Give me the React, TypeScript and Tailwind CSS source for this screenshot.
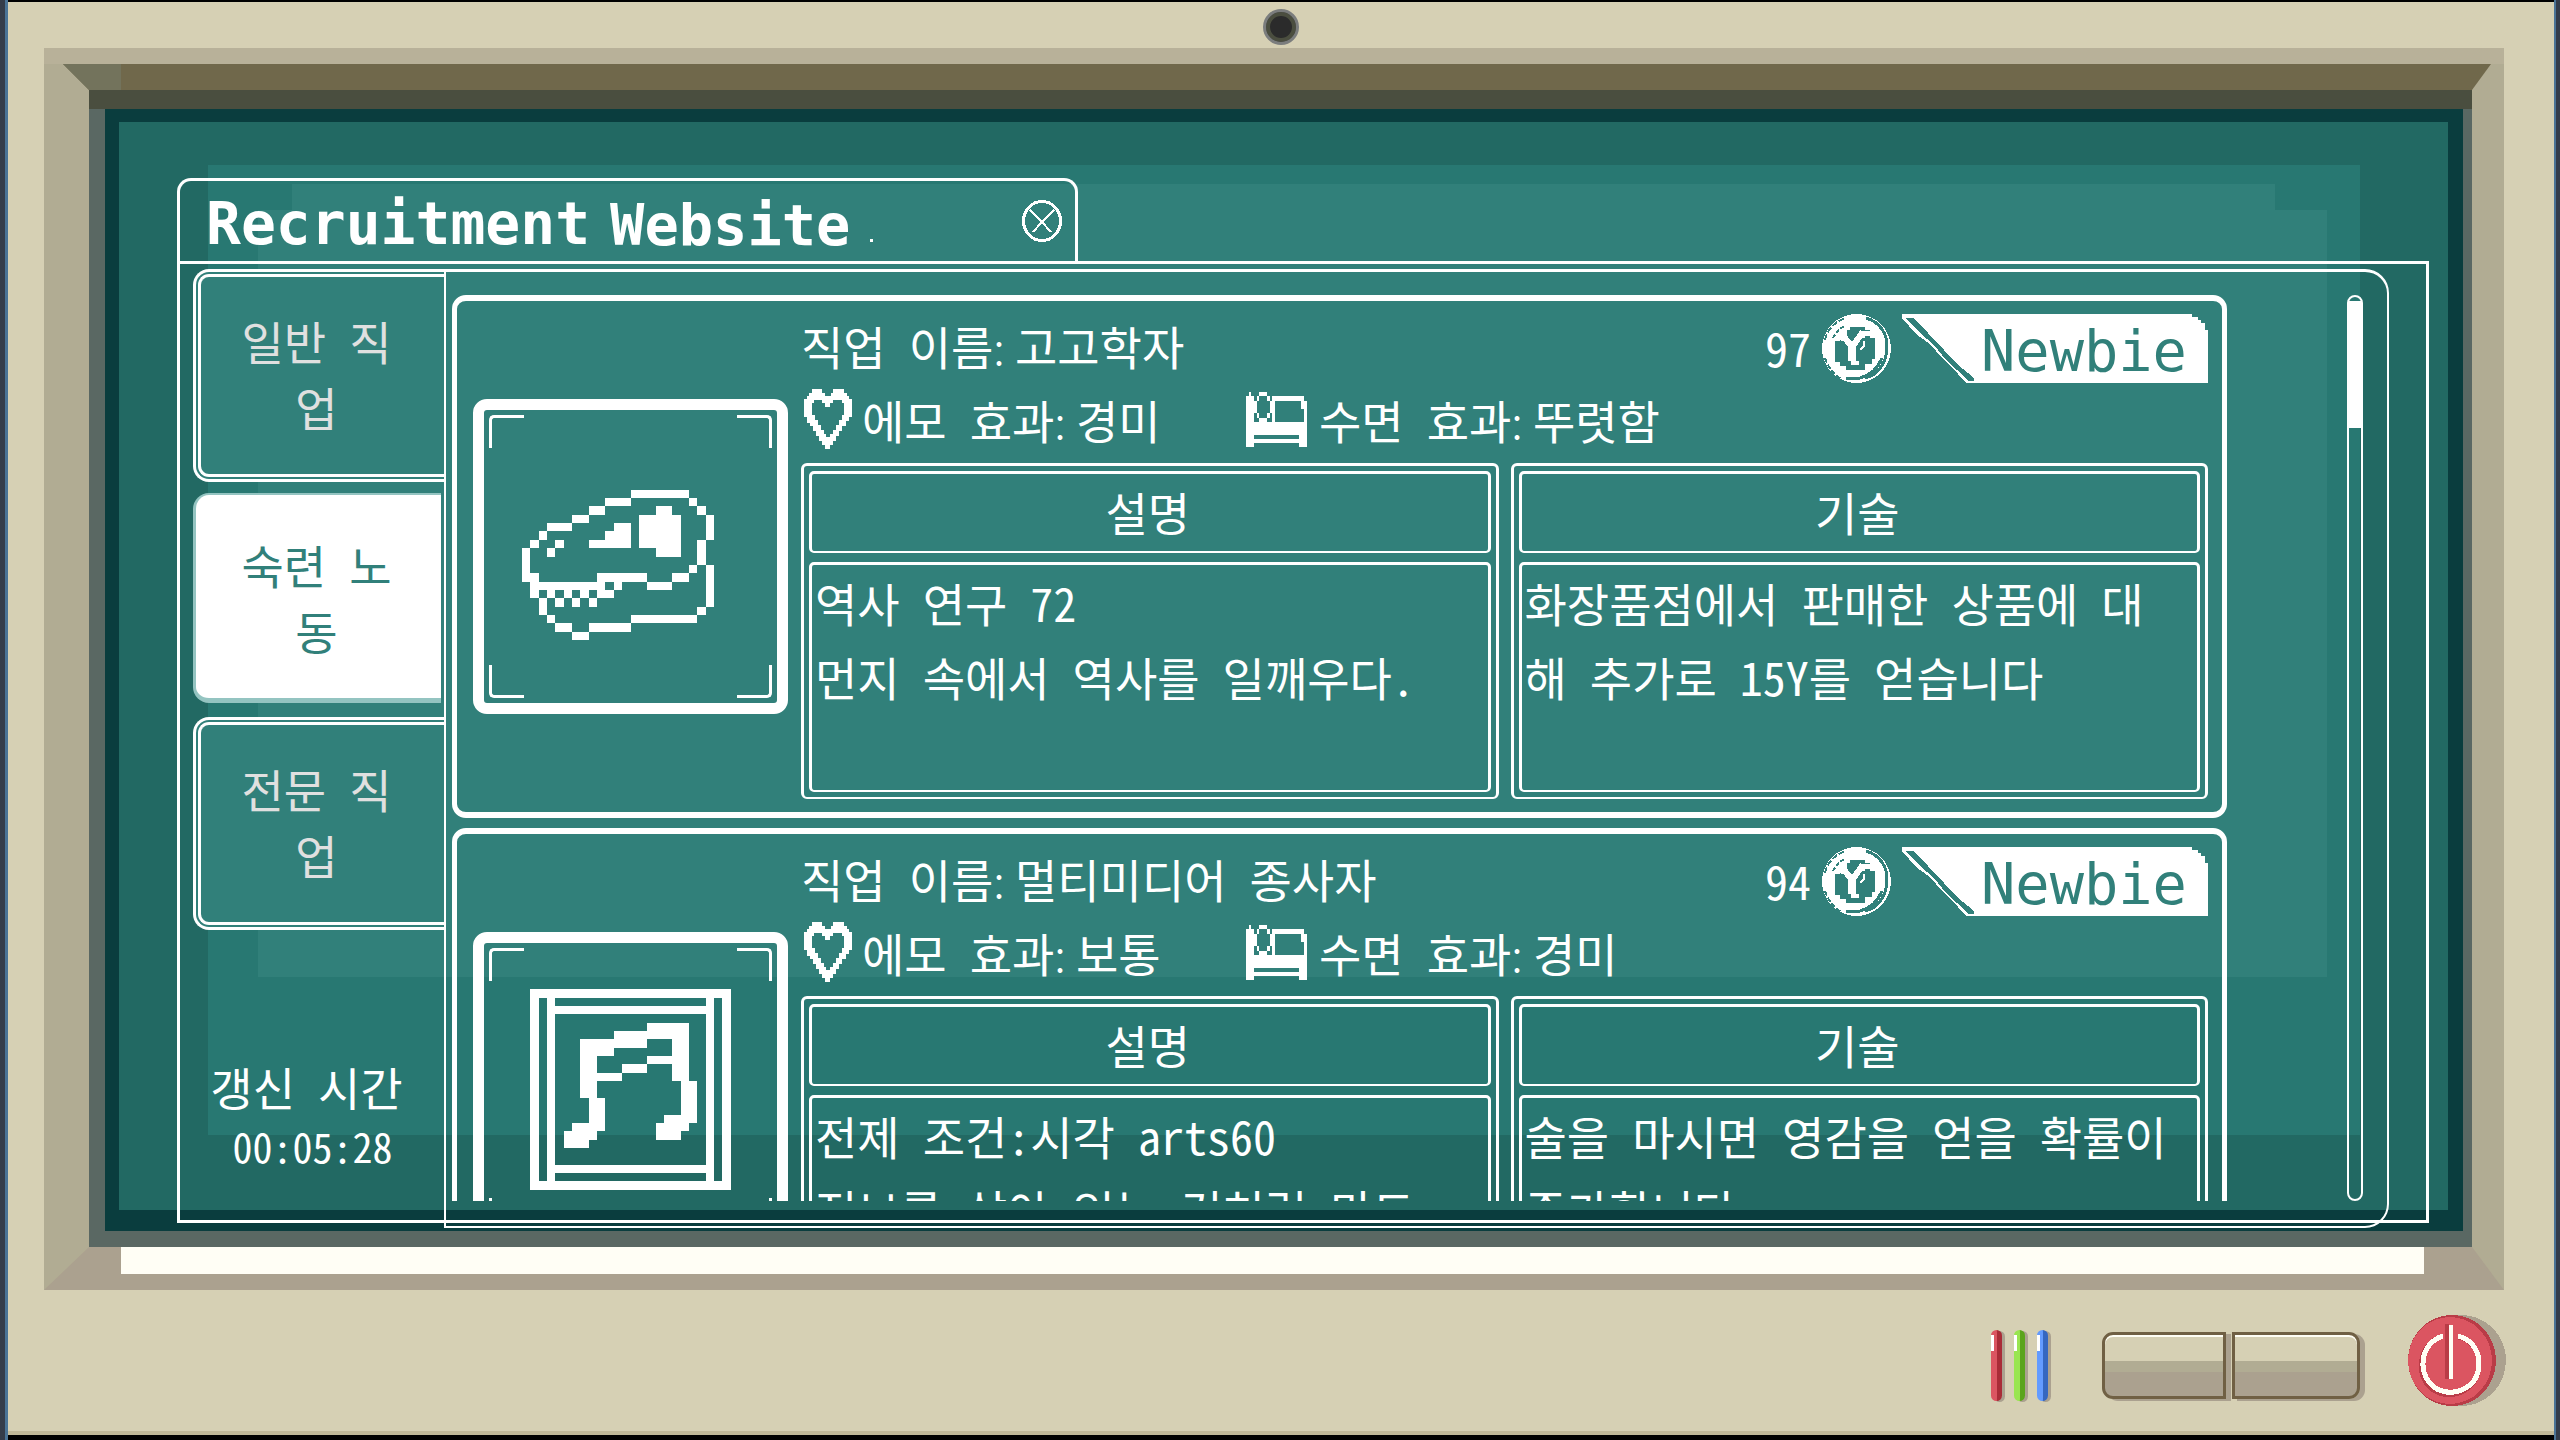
import clsx from 'clsx';
import type { ReactNode } from 'react';
import { useState } from 'react';

type Job = {
  name: string;
  price: number;
  emotion: string;
  sleep: string;
  description: string[];
  skill: string[];
  art: ReactNode;
};

// [x, y, width, height] on a 32 x 32 grid
const SKULL = [
  [16, 8, 7, 1], [13, 9, 3, 1], [23, 9, 1, 1], [11, 10, 2, 1], [19, 10, 2, 1], [24, 10, 1, 1],
  [9, 11, 2, 1], [17, 11, 5, 4], [25, 11, 1, 3], [6, 12, 3, 1], [14, 12, 2, 1], [5, 13, 1, 1],
  [13, 13, 3, 1], [4, 14, 1, 1], [7, 14, 1, 1], [11, 14, 5, 1], [24, 14, 1, 3], [3, 15, 1, 4],
  [6, 15, 1, 1], [19, 15, 3, 1], [23, 17, 1, 1], [25, 17, 1, 5], [4, 18, 1, 1], [12, 18, 6, 1],
  [21, 18, 2, 1], [4, 19, 9, 1], [14, 19, 1, 1], [18, 19, 3, 1], [4, 20, 1, 1], [6, 20, 1, 1],
  [8, 20, 1, 1], [10, 20, 1, 1], [12, 20, 2, 1], [5, 21, 1, 2], [7, 21, 1, 1], [9, 21, 1, 1],
  [11, 21, 1, 1], [24, 22, 1, 1], [6, 23, 1, 1], [16, 23, 8, 1], [7, 24, 2, 1], [11, 24, 5, 1],
  [9, 25, 2, 1],
];

const MUSIC = [
  [4, 4, 24, 1], [4, 27, 24, 1], [4, 4, 1, 24], [27, 4, 1, 24], [6, 4, 1, 24], [25, 4, 1, 24],
  [6, 6, 20, 1], [6, 25, 20, 1], [18, 8, 5, 2], [14, 9, 4, 2], [10, 10, 4, 2], [21, 10, 2, 5],
  [10, 10, 2, 7], [18, 12, 3, 1], [15, 13, 3, 1], [12, 14, 3, 1], [22, 15, 2, 5], [20, 19, 3, 2],
  [19, 20, 3, 2], [11, 17, 2, 4], [9, 20, 3, 2], [8, 21, 3, 2],
];

const PixelArt = ({ cells }: { cells: number[][] }) => (
  <svg aria-hidden="true" className="h-[267px] w-[267px]" fill="#fff" shapeRendering="crispEdges" viewBox="0 0 32 32">
    {cells.map(([x, y, w, h]) => (
      <rect height={h} key={`${x}-${y}-${w}-${h}`} width={w} x={x} y={y} />
    ))}
  </svg>
);

const JOBS: Job[] = [
  {
    name: '고고학자',
    price: 97,
    emotion: '경미',
    sleep: '뚜렷함',
    description: ['역사 연구 72', '먼지 속에서 역사를 일깨우다.'],
    skill: ['화장품점에서 판매한 상품에 대', '해 추가로 15Y를 얻습니다'],
    art: <PixelArt cells={SKULL} />,
  },
  {
    name: '멀티미디어 종사자',
    price: 94,
    emotion: '보통',
    sleep: '경미',
    description: ['전제 조건:시각 arts60', '정보를 살아 있는 것처럼 만드'],
    skill: ['술을 마시면 영감을 얻을 확률이', '증가합니다'],
    art: <PixelArt cells={MUSIC} />,
  },
];

const TABS = [
  ['일반 직', '업'],
  ['숙련 노', '동'],
  ['전문 직', '업'],
];

const HeartIcon = () => (
  <svg aria-hidden="true" className="h-[60px] w-12 shrink-0" fill="#fff" shapeRendering="crispEdges" viewBox="0 0 48 60">
    <path
      d="M8 0H18V4H21V7H27V4H29V0H40V4H43V7H45V10H48V28H45V32H42V37H38V42H35V47H32V52H29V56H26V60H21V56H18V52H15V47H12V42H9V37H6V34H3V28H0V10H3V7H5V4H8ZM10 11V14H8V26H11V31H14V36H17V41H20V45H22V48H26V45H29V41H32V36H35V31H38V26H40V14H38V11H29V14H26V18H21V14H18V11Z"
      fillRule="evenodd"
    />
  </svg>
);

const BedIcon = () => (
  <svg aria-hidden="true" className="h-[55px] w-[61px] shrink-0" fill="#fff" shapeRendering="crispEdges" viewBox="0 0 61 55">
    <path d="M3 0H5V4H8V30H61V55H53V51H8V55H0V4H3ZM8 43V47H53V43Z" fillRule="evenodd" />
    <path d="M13 0H21V4H13ZM11 4H13V9H11ZM21 4H24V9H21ZM8 9H11V21H8ZM24 9H26V21H24ZM11 21H13V26H11ZM21 21H24V26H21ZM13 26H21V30H13Z" />
    <path d="M26 4H29V30H26ZM29 4H56V9H29ZM55 4H58V9H61V30H58V17H55Z" />
  </svg>
);

const CoinIcon = () => (
  <svg aria-hidden="true" className="h-[69px] w-[69px] shrink-0" fill="none" shapeRendering="crispEdges" viewBox="0 0 69 69">
    <circle cx="34.5" cy="34.5" fill="#fff" r="34.5" />
    <path d="M44 4C58 8 66 20 65 35C64 49 56 61 43 64" stroke="#31807a" strokeWidth="3" />
    <path d="M60 44C56 54 49 61 38 64L24 65" stroke="#31807a" strokeWidth="3" />
    <path d="M3 44C6 54 13 62 20 65" stroke="#31807a" strokeDasharray="5 2" strokeWidth="2" />
    <path d="M3 26C5 16 13 7 24 4" stroke="#31807a" strokeDasharray="6 2" strokeWidth="2" />
    <path d="M11 24C14 18 18 14 23 12" stroke="#31807a" strokeDasharray="4 2" strokeWidth="2" />
    <path d="M25 16H28V13H43V16H48V24H53V45H50V50H43V56H24V52H18V48H13V27H18V24H21V21H25Z" fill="#31807a" />
    <path d="M15 23L23 24L30 33L41 18" stroke="#fff" strokeWidth="6" />
    <path d="M37 17H49V22H43V24H37Z" fill="#fff" />
    <path d="M26 30H34V47H37V51H29V47H26Z" fill="#fff" />
    <path d="M42 27V32L38 36" stroke="#fff" strokeWidth="2" />
  </svg>
);

const RankBadge = ({ children }: { children: ReactNode }) => (
  <div className="relative h-[69px] w-[306px]">
    <svg aria-hidden="true" className="absolute inset-0 h-full w-full" shapeRendering="crispEdges" viewBox="0 0 306 69">
      <path d="M0 0H290V3H296V6H299V9H303V16H306V69H64L56 60L50 54L40 44L28 30L14 20L0 4Z" fill="#fff" />
      <path d="M4 4H11L26 19L42 36L55 50L72 64V67H66L55 56L44 46L32 31L18 19Z" fill="#31807a" />
    </svg>
    <span className="relative block pt-[3px] pl-[79px] font-['DejaVu_Sans_Mono',monospace] text-[57px] leading-[69px] text-[#31807a]">
      {children}
    </span>
  </div>
);

const FrameCorners = () => (
  <>
    <i className="absolute top-[5px] left-[5px] h-[33px] w-[35px] rounded-tl-[5px] border-t-[3px] border-l-[3px] border-white" />
    <i className="absolute top-[5px] right-[5px] h-[33px] w-[35px] rounded-tr-[5px] border-t-[3px] border-r-[3px] border-white" />
    <i className="absolute bottom-[5px] left-[5px] h-[33px] w-[35px] rounded-bl-[5px] border-b-[3px] border-l-[3px] border-white" />
    <i className="absolute right-[5px] bottom-[5px] h-[33px] w-[35px] rounded-br-[5px] border-r-[3px] border-b-[3px] border-white" />
  </>
);

const Stat = ({ label, value }: { label: string; value: string }) => (
  <span className="whitespace-nowrap">
    {label}
    <span className="font-['Noto_Sans_CJK_KR',sans-serif]">: </span>
    {value}
  </span>
);

const InfoBox = ({ title, lines }: { title: string; lines: string[] }) => (
  <section className="flex h-[336px] min-w-0 flex-1 flex-col gap-[9px] rounded-[6px] border-[3px] border-b-2 border-white p-[5px]">
    <h3 className="flex h-[82px] items-center justify-center rounded-[5px] border-[3px] border-b-2 border-white pr-1 pb-1">
      {title}
    </h3>
    <div className="flex-1 rounded-[5px] border-[3px] border-b-2 border-white px-[3px] leading-[74px] whitespace-nowrap">
      {lines.map((line) => (
        <p key={line}>{line}</p>
      ))}
    </div>
  </section>
);

const JobCard = ({ job }: { job: Job }) => (
  <article className="flex h-[523px] shrink-0 rounded-[14px] border-x-[5px] border-y-[6px] border-white pr-[14px] pl-4">
    <div className="relative mt-[98px] flex h-[315px] w-[315px] shrink-0 items-center justify-center rounded-[14px] border-[11px] border-white">
      <FrameCorners />
      {job.art}
    </div>
    <div className="ml-[13px] min-w-0 flex-1 pt-[13px]">
      <div className="flex items-center gap-[11px]">
        <h2 className="flex-1 pb-2">
          <Stat label="직업 이름" value={job.name} />
        </h2>
        <span className="pb-1">{job.price}</span>
        <CoinIcon />
        <RankBadge>Newbie</RankBadge>
      </div>
      <div className="mt-[6px] flex h-[60px] items-center pl-[3px]">
        <div className="flex w-[442px] items-center gap-[10px]">
          <HeartIcon />
          <Stat label="에모 효과" value={job.emotion} />
        </div>
        <div className="flex items-center gap-[12px]">
          <BedIcon />
          <Stat label="수면 효과" value={job.sleep} />
        </div>
      </div>
      <div className="mt-[14px] flex gap-3">
        <InfoBox lines={job.description} title="설명" />
        <InfoBox lines={job.skill} title="기술" />
      </div>
    </div>
  </article>
);

const Sidebar = () => {
  const [active, setActive] = useState(1);

  return (
    <nav className="flex w-[251px] shrink-0 flex-col gap-[11px]">
      {TABS.map((lines, i) => (
        <button
          className={clsx(
            'rounded-l-[16px] leading-[66px]',
            i === active
              ? 'mr-[3px] mb-[3px] h-[210px] border-t-2 border-b-[5px] border-l-[3px] border-[#94c4c1] bg-white pr-1 text-[#31807a]'
              : 'h-[213px] border-8 border-r-0 border-double border-white bg-[#31807a] pr-3 pb-[6px] text-[#e0e0e0]',
          )}
          key={lines[0]}
          onClick={() => setActive(i)}
          type="button"
        >
          {lines.map((line) => (
            <span className="block" key={line}>
              {line}
            </span>
          ))}
        </button>
      ))}
      <div className="mt-auto mb-11 pr-6 text-center leading-[60px]">
        <p>갱신 시간</p>
        <p className="pl-3 text-[40px]">00:05:28</p>
      </div>
    </nav>
  );
};

const ScreenGlow = () => (
  <div aria-hidden="true">
    <div className="absolute top-[13px] right-[15px] bottom-[21px] left-[14px] bg-[#226963]" />
    <div className="absolute top-[56px] right-[103px] bottom-[96px] left-[103px] bg-[#287872]" />
    <div className="absolute top-[75px] right-[188px] left-[187px] h-[26px] bg-[#31807a]" />
    <div className="absolute top-[101px] right-[136px] bottom-[254px] left-[153px] bg-[#31807a]" />
  </div>
);

const BrowserWindow = () => (
  <div className="relative flex min-h-0 flex-1 flex-col">
    <header className="flex h-[83px] w-[901px] items-center justify-between rounded-t-[14px] border-x-[3px] border-t-[3px] border-white pr-[13px] pl-[26px]">
      <h1 className="flex items-center gap-5 pt-[6px] font-['DejaVu_Sans_Mono',monospace] text-[58px] leading-[74px] font-bold">
        <span>Recruitment</span>
        <span className="pt-[2px] text-[57px]">Website</span>
        <i className="mt-8 h-[3px] w-[3px] bg-white" />
      </h1>
      <button aria-label="Close" type="button">
        <svg className="h-[42px] w-10" fill="none" shapeRendering="crispEdges" stroke="#fff" viewBox="0 0 40 42">
          <ellipse cx="20" cy="21" rx="18.5" ry="19.5" strokeWidth="3" />
          <path d="M8 10L20 22L32 10M20 22L11 32M20 22L29 32" strokeWidth="2" />
        </svg>
      </button>
    </header>
    <div className="flex min-h-0 flex-1 border-[3px] border-white pt-[5px] pr-[37px] pl-[13px]">
      <Sidebar />
      <main className="-mb-2 flex min-h-0 min-w-0 flex-1 rounded-r-[24px] border-2 border-t-[3px] border-white pt-[23px] pr-6 pb-[25px] pl-[6px]">
        <div className="mr-[120px] flex min-h-0 min-w-0 flex-1 flex-col gap-[10px] overflow-hidden">
          {JOBS.map((job) => (
            <JobCard job={job} key={job.name} />
          ))}
        </div>
        <div className="w-4 rounded-full border-2 border-white pt-1">
          <div className="h-[127px] bg-white" />
        </div>
      </main>
    </div>
  </div>
);

const Led = ({ className }: { className: string }) => (
  <div className={clsx('h-[71px] w-[11px] rounded-full border-r-[5px] shadow-[3px_1px_0_#aba18f]', className)}>
    <div className="h-[21px] w-[3px] border-t-[5px] border-transparent bg-white bg-clip-padding" />
  </div>
);

const PanelButton = ({ label, className }: { label: string; className: string }) => (
  <button
    aria-label={label}
    className={clsx(
      'h-[67px] border-[3px] border-[#706044] bg-[linear-gradient(#d6d0b4_43%,#b1ac93_43%_60%,#aba18f_60%)] shadow-[5px_2px_0_#aba18f,inset_0_2px_0_#fffef5]',
      className,
    )}
    type="button"
  />
);

const PowerButton = () => (
  <button aria-label="Power" type="button">
    <svg className="h-[91px] w-[98px]" fill="none" shapeRendering="crispEdges" viewBox="0 0 98 91">
      <ellipse cx="53" cy="45.5" fill="#aba18f" rx="45" ry="45.5" />
      <ellipse cx="44" cy="45.5" fill="#b93c47" rx="44" ry="45.5" />
      <ellipse cx="42" cy="45.5" fill="#db5561" rx="42" ry="43.5" />
      <path d="M33 22C9 30 6 66 29 77C45 85 71 75 71 48C71 34 62 24 50 22" stroke="#b93c47" strokeWidth="5" />
      <path d="M39 9V64" stroke="#b93c47" strokeWidth="4" />
      <path d="M35 21C11 28 8 62 29 74C46 83 71 73 71 48C71 34 62 24 50 21" stroke="#fffef5" strokeWidth="5" />
      <path d="M43 10V64" stroke="#fffef5" strokeWidth="4" />
    </svg>
  </button>
);

export default function App() {
  return (
    <div className="flex h-screen min-h-[1200px] font-['Noto_Sans_Mono_CJK_KR','Noto_Sans_CJK_KR',sans-serif] text-[46px] leading-[60px] font-light text-white">
      <div className="w-2 shrink-0 border-r-[3px] border-[#4a7396] bg-[#343c4a]" />
      <div className="flex min-w-0 flex-1 flex-col border-t-2 border-b-[5px] border-black bg-[#d6d0b4]">
        <div className="flex h-[46px] shrink-0 items-center justify-center pt-1">
          <div className="h-9 w-9 rounded-full border-[3px] border-[#7b7d7d] bg-[#2b2b2b] ring-4 ring-[#4b4e3f] ring-inset" />
        </div>
        <div className="mr-[50px] ml-9 flex min-h-0 flex-1 flex-col border-t-[16px] border-[#b8b199] bg-[#b1ac93]">
          <div className="h-[26px] shrink-0 bg-[#70684b] [clip-path:polygon(19px_0,calc(100%-13px)_0,calc(100%-32px)_100%,45px_100%)]">
            <div className="h-full w-[77px] bg-[#73735c]" />
          </div>
          <div className="mr-[32px] ml-[45px] flex min-h-0 flex-1 flex-col border-t-[19px] border-[#4a4e3f] bg-[#5a6863] pr-[9px] pb-4 pl-4">
            <div className="relative flex min-h-0 flex-1 flex-col bg-[#0a3d3e] pt-[69px] pr-[34px] pb-2 pl-[72px]">
              <ScreenGlow />
              <BrowserWindow />
            </div>
          </div>
          <div className="h-[43px] shrink-0 bg-[#aba18f] pr-[80px] pl-[77px] [clip-path:polygon(45px_0,calc(100%-32px)_0,100%_100%,0_100%)]">
            <div className="h-[27px] bg-[#fffef5]" />
          </div>
        </div>
        <footer className="flex h-[145px] shrink-0 items-center justify-end border-b-4 border-[#c0b898] pr-[48px]">
          <div className="mt-[10px] mr-[54px] flex gap-3">
            <Led className="border-[#a92c37] bg-[#db5561]" />
            <Led className="border-[#5ba41c] bg-[#99e550]" />
            <Led className="border-[#3567c0] bg-[#639bff]" />
          </div>
          <div className="mt-[10px] mr-[48px] flex gap-[6px]">
            <PanelButton className="w-[124px] rounded-l-[11px]" label="Left panel button" />
            <PanelButton className="w-[128px] rounded-r-[11px]" label="Right panel button" />
          </div>
          <PowerButton />
        </footer>
      </div>
      <div className="w-[6px] shrink-0 border-l-2 border-[#4a7396] bg-[#343c4a]" />
    </div>
  );
}
